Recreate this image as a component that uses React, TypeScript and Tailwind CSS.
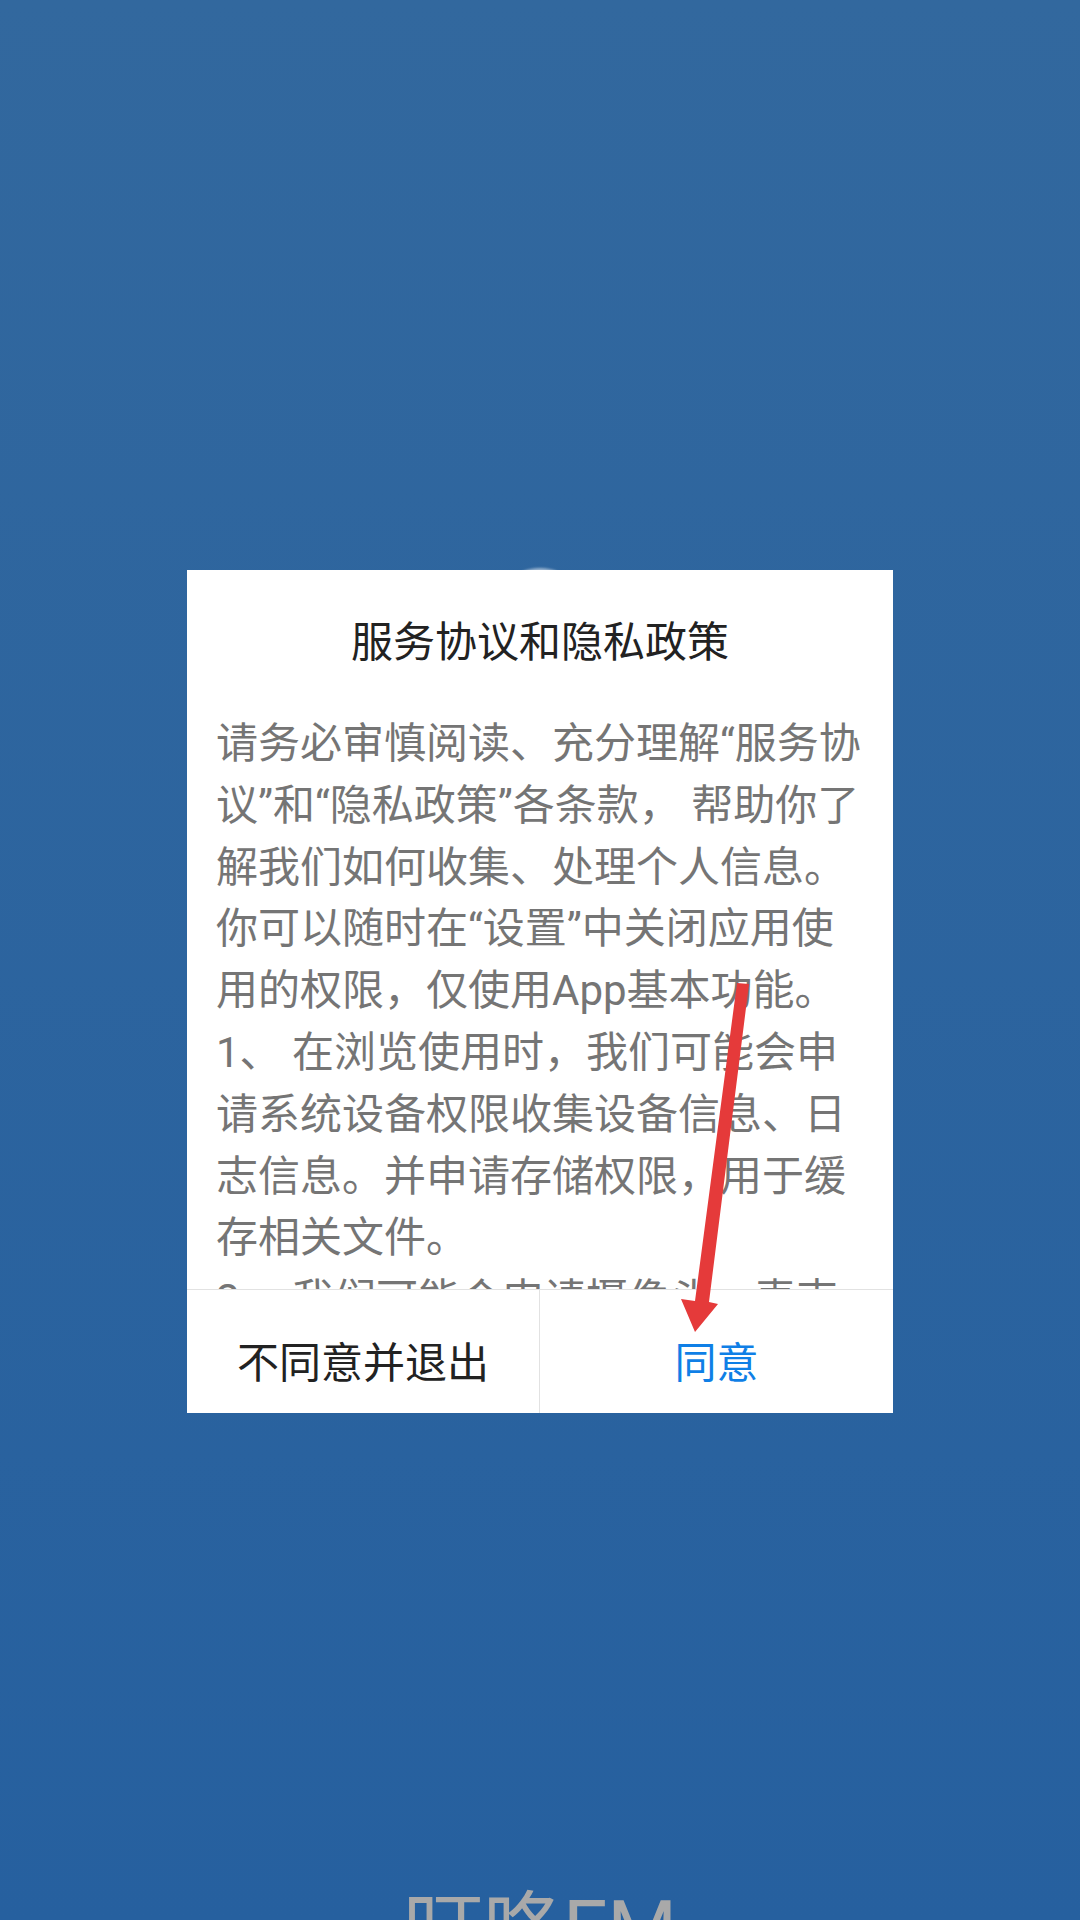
export default function App() {
  return (
    <div
      className="relative w-[1080px] h-[1920px] overflow-hidden flex flex-col items-center bg-gradient-to-b from-[#32689e] to-[#26609f]"
      style={{ fontFamily: 'Roboto, "Noto Sans CJK SC", sans-serif' }}
    >
      {/* logo circle peeking out behind the dialog */}
      <div className="absolute left-[492px] top-[568px] w-[96px] h-[96px] rounded-full bg-white/50 blur-[1px]" />

      <div className="relative mt-[570px] w-[706px] h-[843px] bg-white flex flex-col">
        <div className="h-[143px] pt-[2px] shrink-0 flex items-center justify-center text-[42px] text-[#222222]">
          服务协议和隐私政策
        </div>

        <div className="flex-1 min-h-0 overflow-hidden pl-[29px] pr-[30px] text-[42px] leading-[61.8px] text-[#757575]">
          <p>
            请务必审慎阅读、充分理解“服务协议”和“隐私政策”各条款， 帮助你了解我们如何收集、处理个人信息。
          </p>
          <p>你可以随时在“设置”中关闭应用使用的权限，仅使用App基本功能。</p>
          <p>1、 在浏览使用时，我们可能会申请系统设备权限收集设备信息、日志信息。并申请存储权限，用于缓存相关文件。</p>
          <p>2、 我们可能会申请摄像头、麦克风权限。</p>
        </div>

        <div className="h-[124px] shrink-0 flex border-t border-[#e2e2e2] text-[42px]">
          <button className="w-[353px] pt-[24px] text-[#222222] border-r border-[#e2e2e2]">不同意并退出</button>
          <button className="flex-1 pt-[24px] text-[#0f7fe6]">同意</button>
        </div>
      </div>

      <div className="mt-auto h-[30px] text-[80px] leading-[80px] text-[#a9a9a9] whitespace-nowrap">叮咚FM</div>

      {/* red annotation arrow drawn on top of the screenshot */}
      <svg className="absolute inset-0 pointer-events-none" width="1080" height="1920" viewBox="0 0 1080 1920">
        <polygon points="737,983 749,984 709,1302 718,1304 695,1332 681,1299 695,1301" fill="#e53a3a" />
      </svg>
    </div>
  );
}
